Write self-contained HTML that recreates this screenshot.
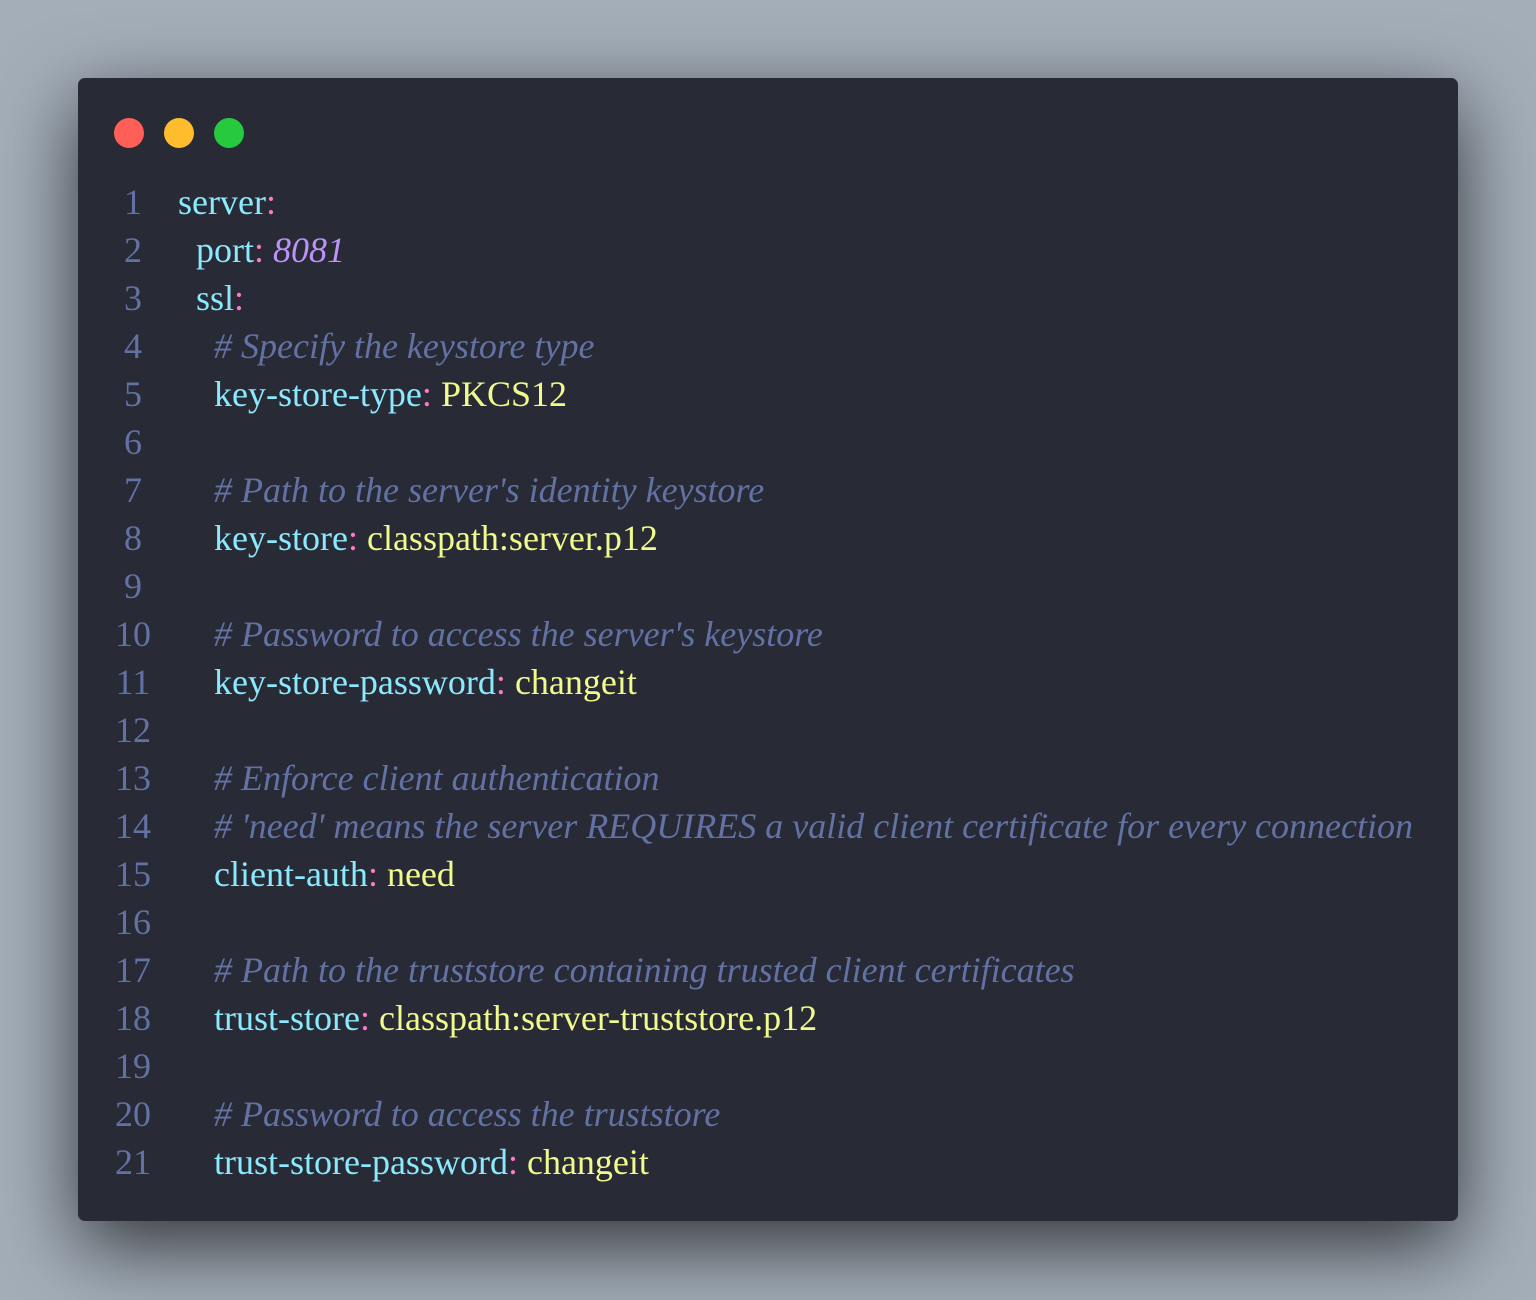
<!DOCTYPE html>
<html><head><meta charset="utf-8"><style>
html,body{margin:0;padding:0;}
body{width:1536px;height:1300px;background:#a4aeb9;position:relative;overflow:hidden;font-family:"Liberation Serif","Times New Roman",Times,"Noto Serif CJK SC",serif;}
.win{position:absolute;left:78px;top:78px;width:1380px;height:1143px;background:#282a36;border-radius:7px;box-shadow:0 25px 80px rgba(0,0,0,0.7);}
.dot{position:absolute;top:40px;width:30px;height:30px;border-radius:50%;}
.code{position:absolute;left:0;top:100px;font-size:36px;line-height:48px;white-space:pre;font-family:"Liberation Serif","Times New Roman",Times,serif;}
.ln{display:inline-block;width:72px;padding-left:19px;text-align:center;color:#6272a4;margin-right:9px;}
.k{color:#8be9fd}.c{color:#ff79c6}.n{color:#bd93f9;font-style:italic}.s{color:#f1fa8c}.m{color:#6272a4;font-style:italic}
</style></head><body>
<div class="win">
<div class="dot" style="left:36px;background:#ff5f56"></div>
<div class="dot" style="left:86px;background:#ffbd2e"></div>
<div class="dot" style="left:136px;background:#27c93f"></div>
<div class="code"><div><span class="ln">1</span><span class="k">server</span><span class="c">:</span></div><div><span class="ln">2</span>  <span class="k">port</span><span class="c">:</span> <span class="n">8081</span></div><div><span class="ln">3</span>  <span class="k">ssl</span><span class="c">:</span></div><div><span class="ln">4</span>    <span class="m"># Specify the keystore type</span></div><div><span class="ln">5</span>    <span class="k">key-store-type</span><span class="c">:</span> <span class="s">PKCS12</span></div><div><span class="ln">6</span></div><div><span class="ln">7</span>    <span class="m"># Path to the server's identity keystore</span></div><div><span class="ln">8</span>    <span class="k">key-store</span><span class="c">:</span> <span class="s">classpath:server.p12</span></div><div><span class="ln">9</span></div><div><span class="ln">10</span>    <span class="m"># Password to access the server's keystore</span></div><div><span class="ln">11</span>    <span class="k">key-store-password</span><span class="c">:</span> <span class="s">changeit</span></div><div><span class="ln">12</span></div><div><span class="ln">13</span>    <span class="m"># Enforce client authentication</span></div><div><span class="ln">14</span>    <span class="m"># 'need' means the server REQUIRES a valid client certificate for every connection</span></div><div><span class="ln">15</span>    <span class="k">client-auth</span><span class="c">:</span> <span class="s">need</span></div><div><span class="ln">16</span></div><div><span class="ln">17</span>    <span class="m"># Path to the truststore containing trusted client certificates</span></div><div><span class="ln">18</span>    <span class="k">trust-store</span><span class="c">:</span> <span class="s">classpath:server-truststore.p12</span></div><div><span class="ln">19</span></div><div><span class="ln">20</span>    <span class="m"># Password to access the truststore</span></div><div><span class="ln">21</span>    <span class="k">trust-store-password</span><span class="c">:</span> <span class="s">changeit</span></div></div>
</div>
</body></html>
